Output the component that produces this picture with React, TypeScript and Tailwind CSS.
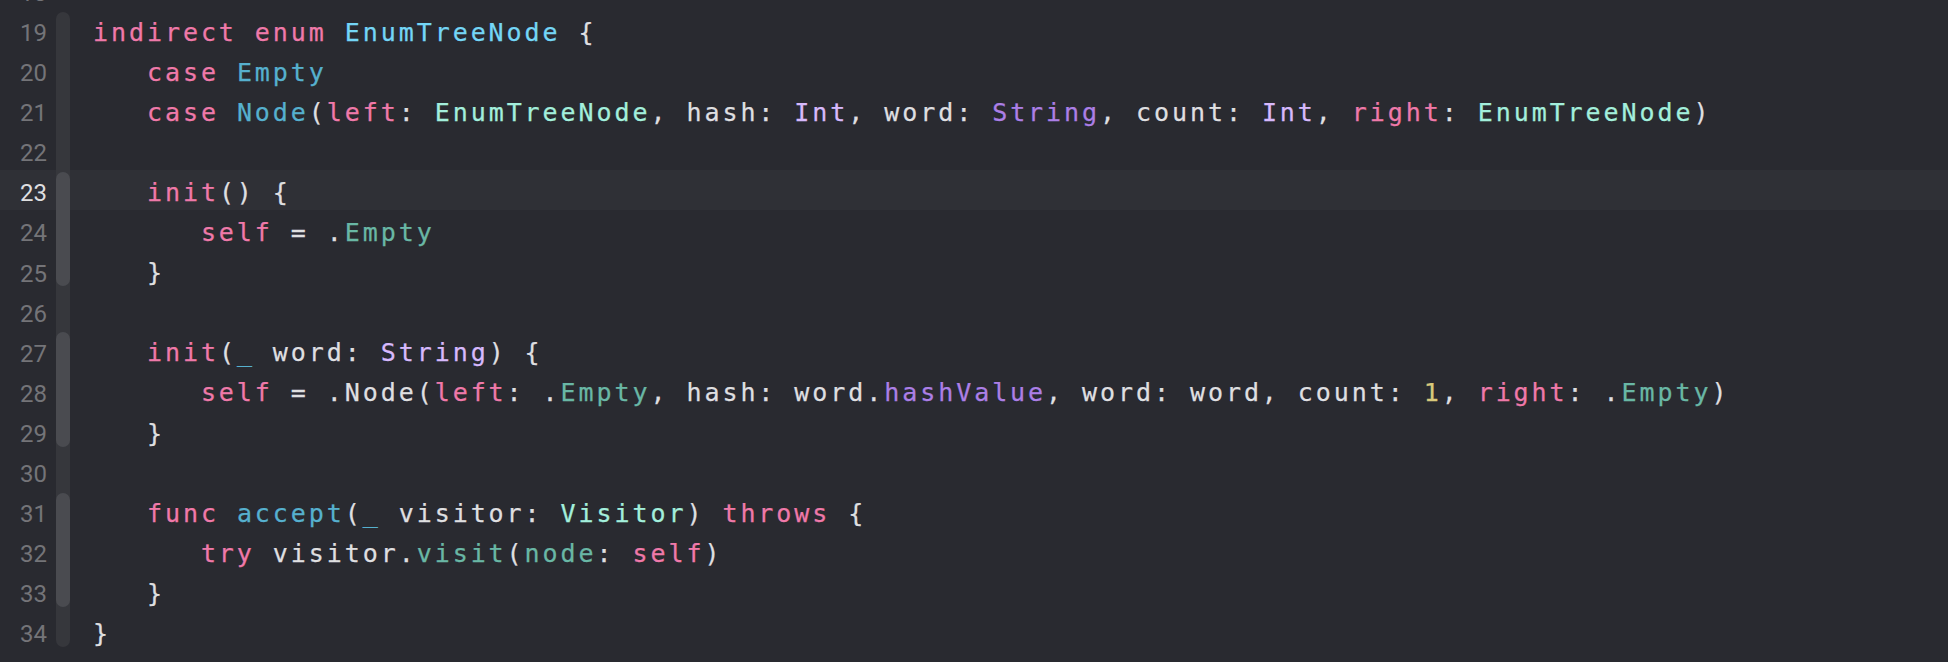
import React from "react";

const PK = "#ef79a9"; // keyword pink
const DC = "#74d6f6"; // type declaration cyan
const BL = "#56b0ce"; // other declaration blue
const MT = "#a3efdc"; // project type mint
const TL = "#69b7a5"; // project member teal
const LV = "#d7b9fc"; // system type lavender
const PU = "#ac7fe6"; // system member purple
const YL = "#d9c97c"; // number
const WH = "#dfdfe0"; // plain

type Tok = [string, string];

const t = (s: string, c: string = WH): Tok => [s, c];

const lines: { n: number; toks: Tok[]; cur?: boolean }[] = [
  { n: 18, toks: [] },
  {
    n: 19,
    toks: [t("indirect", PK), t(" "), t("enum", PK), t(" "), t("EnumTreeNode", DC), t(" {")],
  },
  { n: 20, toks: [t("   "), t("case", PK), t(" "), t("Empty", BL)] },
  {
    n: 21,
    toks: [
      t("   "),
      t("case", PK),
      t(" "),
      t("Node", BL),
      t("("),
      t("left", PK),
      t(": "),
      t("EnumTreeNode", MT),
      t(", hash: "),
      t("Int", LV),
      t(", word: "),
      t("String", PU),
      t(", count: "),
      t("Int", LV),
      t(", "),
      t("right", PK),
      t(": "),
      t("EnumTreeNode", MT),
      t(")"),
    ],
  },
  { n: 22, toks: [] },
  { n: 23, cur: true, toks: [t("   "), t("init", PK), t("() {")] },
  { n: 24, toks: [t("      "), t("self", PK), t(" = ."), t("Empty", TL)] },
  { n: 25, toks: [t("   }")] },
  { n: 26, toks: [] },
  {
    n: 27,
    toks: [t("   "), t("init", PK), t("("), t("_", BL), t(" word: "), t("String", LV), t(") {")],
  },
  {
    n: 28,
    toks: [
      t("      "),
      t("self", PK),
      t(" = .Node("),
      t("left", PK),
      t(": ."),
      t("Empty", TL),
      t(", hash: word."),
      t("hashValue", PU),
      t(", word: word, count: "),
      t("1", YL),
      t(", "),
      t("right", PK),
      t(": ."),
      t("Empty", TL),
      t(")"),
    ],
  },
  { n: 29, toks: [t("   }")] },
  { n: 30, toks: [] },
  {
    n: 31,
    toks: [
      t("   "),
      t("func", PK),
      t(" "),
      t("accept", BL),
      t("("),
      t("_", BL),
      t(" visitor: "),
      t("Visitor", MT),
      t(") "),
      t("throws", PK),
      t(" {"),
    ],
  },
  {
    n: 32,
    toks: [
      t("      "),
      t("try", PK),
      t(" visitor."),
      t("visit", TL),
      t("("),
      t("node", TL),
      t(": "),
      t("self", PK),
      t(")"),
    ],
  },
  { n: 33, toks: [t("   }")] },
  { n: 34, toks: [t("}")] },
  { n: 35, toks: [] },
];

function Ribbon({ n }: { n: number }) {
  if (n < 19 || n > 34) return <div className="w-[14px] h-full" />;
  const outerFirst = n === 19;
  const outerLast = n === 34;
  const pills: [number, number][] = [
    [23, 25],
    [27, 29],
    [31, 33],
  ];
  const pill = pills.find(([a, b]) => n >= a && n <= b);
  return (
    <div className="w-[14px] h-full flex flex-col">
      <div
        className={
          "w-[14px] flex-1 bg-[#36373c] flex flex-col " +
          (outerFirst ? "mt-[2.5px] rounded-t-[7px] " : "") +
          (outerLast ? "mb-[4px] rounded-b-[7px] " : "")
        }
      >
        {pill ? (
          <div
            className={
              "w-[14px] flex-1 bg-[#4a4b50] " +
              (n === pill[0] ? "mt-[2px] rounded-t-[7px] " : "") +
              (n === pill[1] ? "mb-[4px] rounded-b-[7px] " : "")
            }
          />
        ) : null}
      </div>
    </div>
  );
}

export default function App() {
  return (
    <div className="w-[1948px] h-[662px] overflow-hidden bg-[#292a30]">
      <div className="mt-[-30.5px] flex flex-col">
        {lines.map((l) => (
          <div
            key={l.n}
            className={
              "h-[40.1px] flex flex-row items-stretch " + (l.cur ? "bg-[#2f3036]" : "")
            }
          >
            <div
              className={
                "w-[47px] shrink-0 text-right pt-[3.4px] leading-[40.1px] text-[24px] " +
                (l.cur ? "text-[#dfdfe0]" : "text-[#747478]")
              }
              style={{ fontFamily: "Roboto, 'Liberation Sans', sans-serif" }}
            >
              {l.n}
            </div>
            <div className="ml-[9px] shrink-0">
              <Ribbon n={l.n} />
            </div>
            <div
              className="ml-[23px] pt-[3px] leading-[40.1px] text-[25px] tracking-[2.93px] whitespace-pre [-webkit-text-stroke:0.25px]"
              style={{ fontFamily: "'DejaVu Sans Mono', monospace" }}
            >
              {l.toks.map((tk, i) => (
                <span key={i} style={{ color: tk[1] }}>
                  {tk[0]}
                </span>
              ))}
            </div>
          </div>
        ))}
      </div>
    </div>
  );
}
